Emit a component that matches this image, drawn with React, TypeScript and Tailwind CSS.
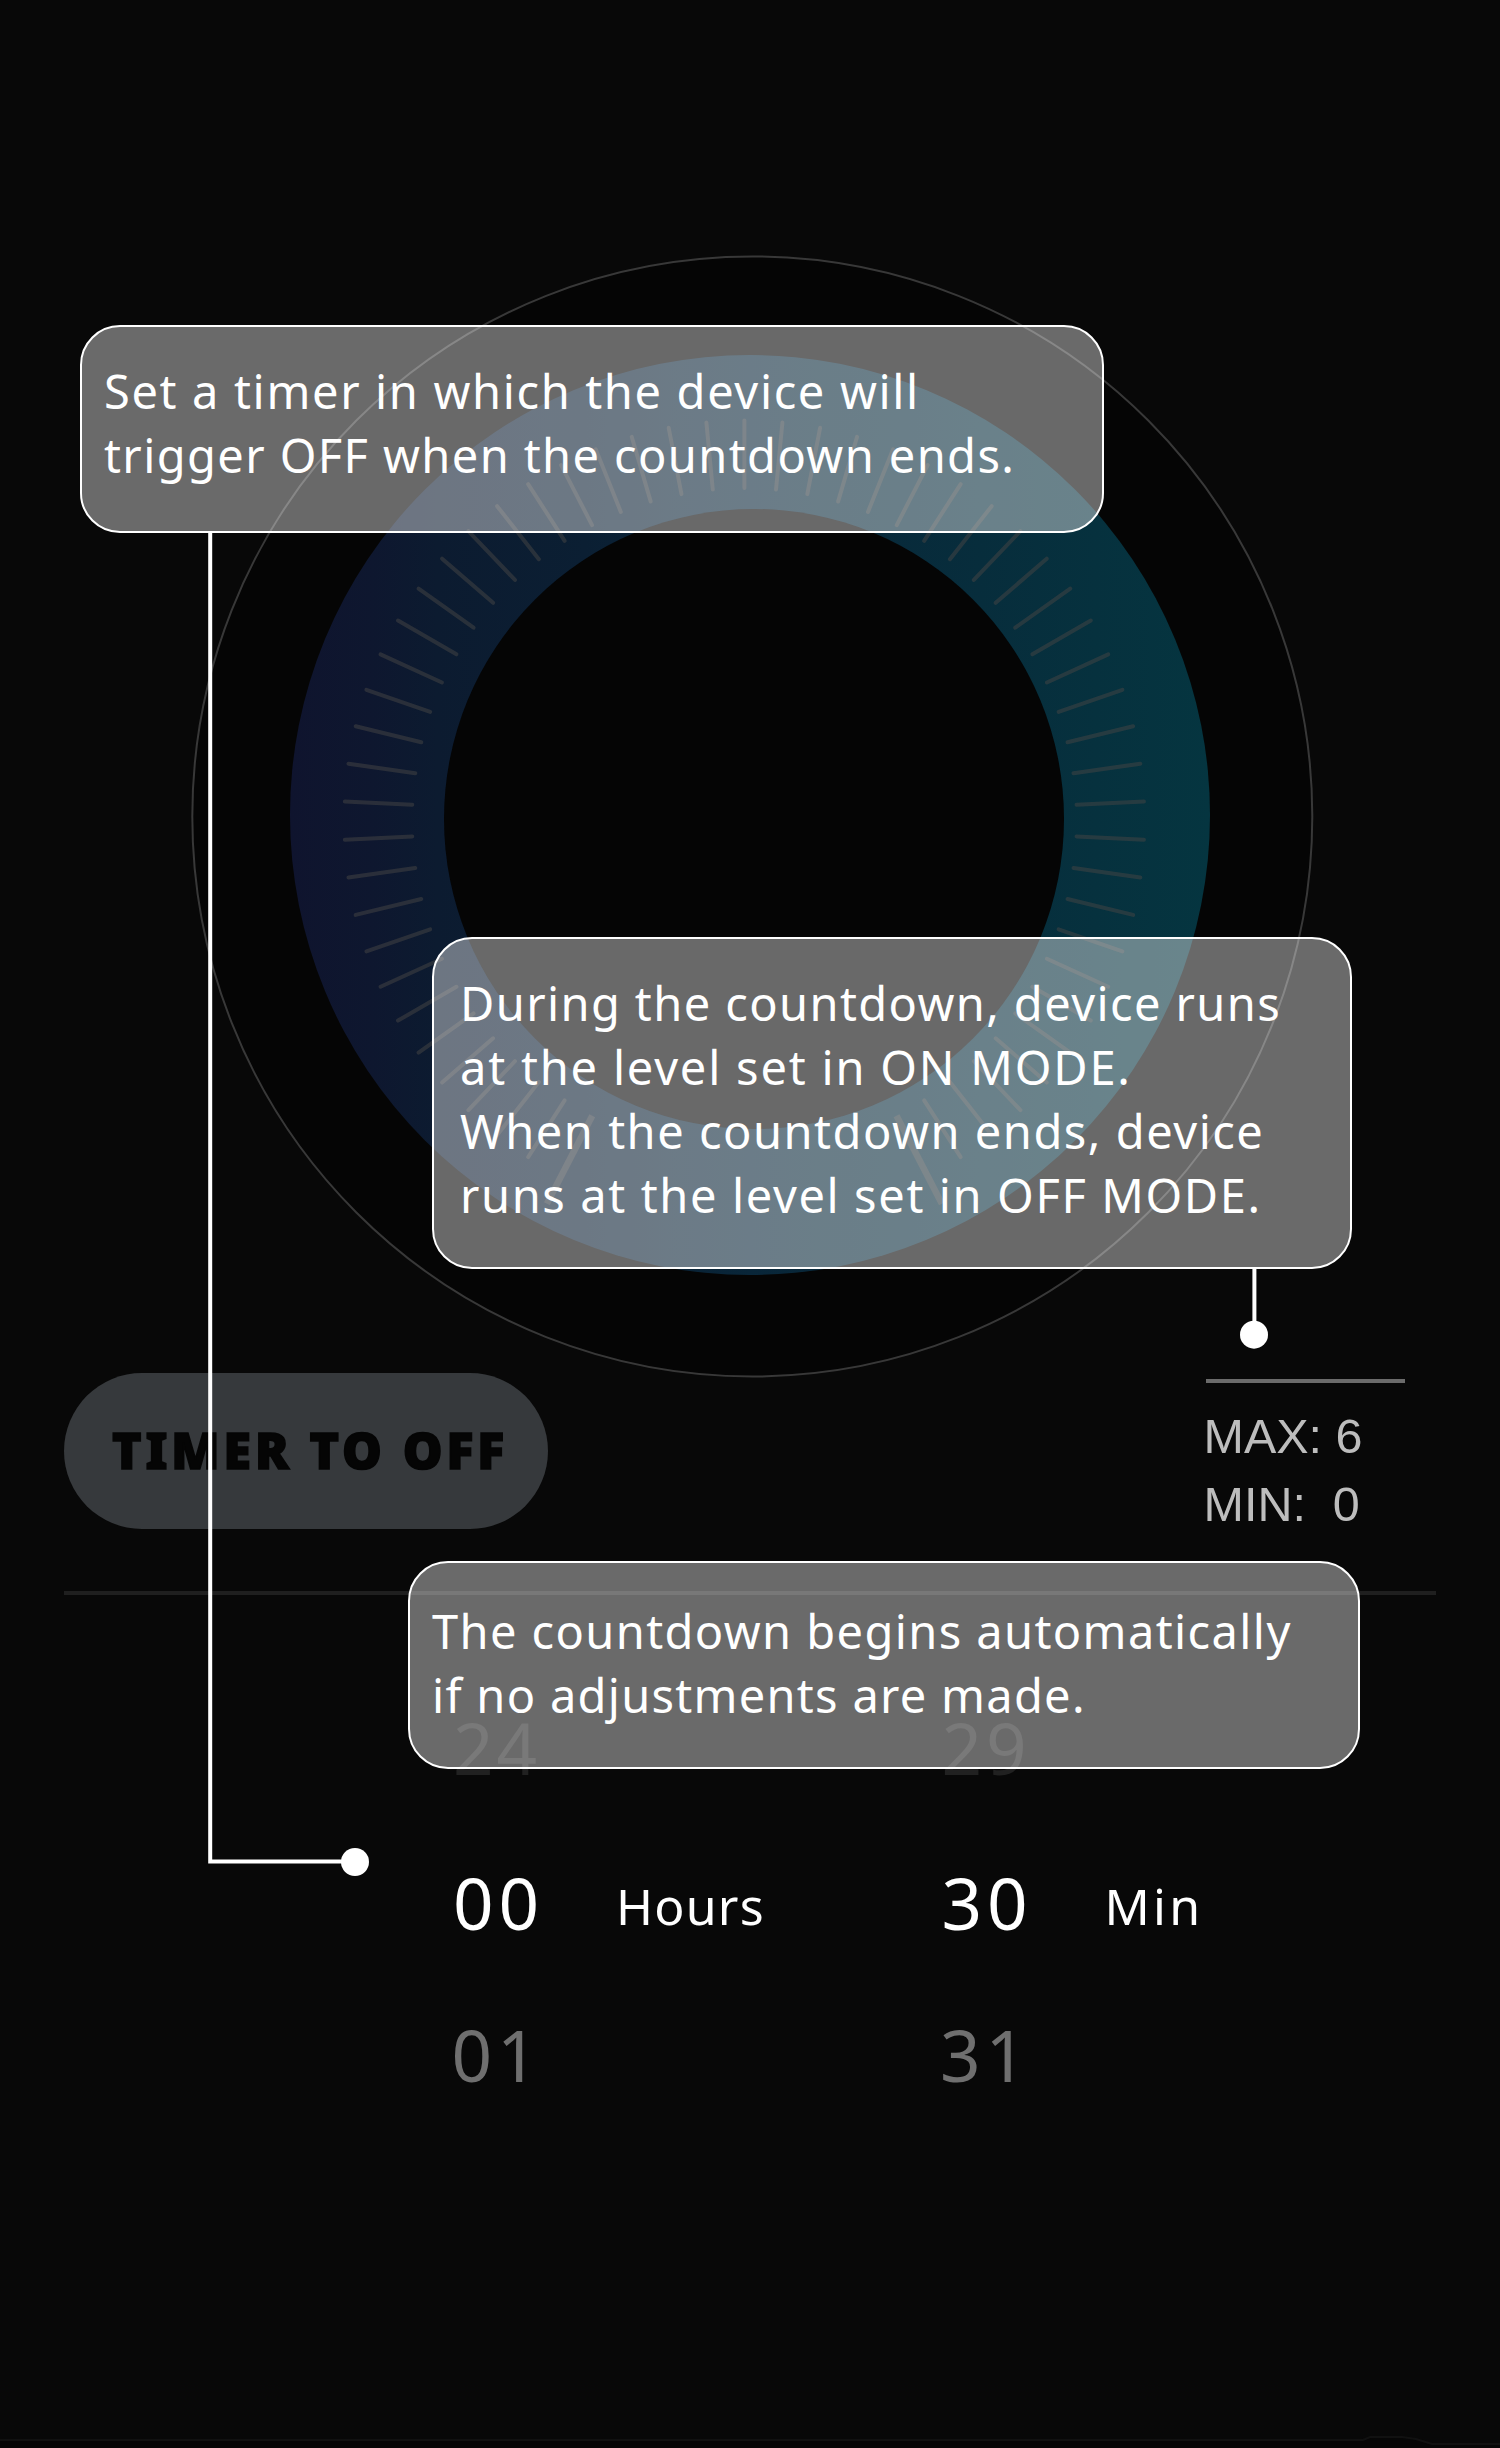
import React from "react";

const TICK_CENTER = { x: 744.4, y: 820.6 };
const TICK_STEP = 360 / 66;
const TICKS = Array.from({ length: 55 }, (_, i) => (i - 27) * TICK_STEP);
const END_TICKS = [-28 * TICK_STEP, 28 * TICK_STEP];

function Dial() {
  return (
    <svg className="block h-[1373px] w-full overflow-visible" viewBox="0 0 1500 1373" fill="none">
      <defs>
        <linearGradient id="ring" gradientUnits="userSpaceOnUse" x1="290" y1="0" x2="1210" y2="0">
          <stop offset="0" stopColor="#0f142e" />
          <stop offset="0.09" stopColor="#0e172f" />
          <stop offset="0.16" stopColor="#0c1b30" />
          <stop offset="0.32" stopColor="#0b1f33" />
          <stop offset="0.5" stopColor="#092639" />
          <stop offset="0.75" stopColor="#072d3c" />
          <stop offset="1" stopColor="#053540" />
        </linearGradient>
      </defs>
      <circle cx="752.3" cy="816.5" r="560" fill="#050505" stroke="#383838" strokeWidth="2" />
      <circle cx="750" cy="815" r="460" fill="url(#ring)" />
      <circle cx="754" cy="819" r="310" fill="#050505" />
      <g stroke="#444444" strokeOpacity="0.53" transform={`translate(${TICK_CENTER.x} ${TICK_CENTER.y})`}>
        {TICKS.map((a) => (
          <line key={a} y1="-400" y2="-332.5" strokeWidth="4" strokeLinecap="round" transform={`rotate(${a})`} />
        ))}
        {END_TICKS.map((a) => (
          <line key={a} y1="-431" y2="-332" strokeWidth="6.5" transform={`rotate(${a})`} />
        ))}
      </g>
    </svg>
  );
}

function PickerRow({ children }: { children: React.ReactNode }) {
  return <div className="grid h-full grid-cols-[163px_325.5px_163px_1fr] items-center whitespace-nowrap">{children}</div>;
}

function Connectors() {
  return (
    <svg className="absolute inset-0 h-[2448px] w-[1500px]" viewBox="0 0 1500 2448" fill="none" stroke="#fff" strokeWidth="4">
      <path d="M210.2 533V1861.4H350" />
      <circle cx="355" cy="1862" r="14" fill="#fff" stroke="none" />
      <path d="M1254.4 1269V1330" />
      <circle cx="1254" cy="1334.7" r="14" fill="#fff" stroke="none" />
    </svg>
  );
}

const callout =
  "absolute rounded-[40px] border-2 border-white bg-white/40 text-[47px] leading-[64px] text-white whitespace-nowrap";

export default function App() {
  return (
    <div className="relative h-[2448px] w-[1500px] overflow-hidden bg-[#080808] font-['Noto_Sans',sans-serif]">
      <main className="flex h-full flex-col">
        <Dial />

        <section className="flex h-[218px] shrink-0 items-start justify-between pr-[95px] pl-16">
          <button className="flex h-[156px] w-[484px] items-center rounded-full bg-[#36393c] pb-[2px] pl-[48px] text-[50px] font-black tracking-[3.9px] whitespace-nowrap text-[#050505] [-webkit-text-stroke:1.6px_#050505]">
            TIMER TO OFF
          </button>
          <div className="mt-1.5 w-[199px] border-t-4 border-[#6b6b6b] pt-[19px] font-['Liberation_Sans',sans-serif] text-[48.5px] leading-[68px] whitespace-pre text-[#bdbdbd]">
            <p className="-ml-[2.5px]">MAX: 6</p>
            <p className="-ml-[2.5px]">{"MIN:\u00a0 0"}</p>
          </div>
        </section>

        <hr className="mx-16 h-1 shrink-0 border-0 bg-[#1f1f1f]" />

        <section className="mt-[74px] grid shrink-0 grid-rows-[156px_155px_149px] pl-[453px] text-[71px] leading-none tracking-[5px]">
          <PickerRow>
            <span className="tracking-[3px] text-[#212121]">24</span>
            <span />
            <span className="tracking-[4px] text-[#212121]">29</span>
          </PickerRow>
          <PickerRow>
            <span className="text-white">00</span>
            <span className="pt-1.5 text-[50px] tracking-[1.2px] text-white">Hours</span>
            <span className="text-white">30</span>
            <span className="pt-1.5 text-[50px] tracking-[3.2px] text-white">Min</span>
          </PickerRow>
          <PickerRow>
            <span className="-ml-[1.5px] text-[#6f6f6f]">01</span>
            <span />
            <span className="-ml-[1.5px] text-[#6f6f6f]">31</span>
          </PickerRow>
        </section>

        <svg className="mt-auto block h-3 w-full shrink-0" viewBox="0 0 1500 12" fill="none">
          <path d="M0 4H1363L1370 1H1402L1416 3L1432 8H1500V12H0Z" fill="#060606" />
          <path d="M0 4H1363L1370 1H1402L1416 3L1432 8H1500" stroke="#111111" strokeWidth="2" />
        </svg>
      </main>

      <Connectors />

      <aside className={`${callout} top-[325px] left-[80px] h-[208px] w-[1024px] pt-8 pl-[22px]`}>
        <p className="tracking-[1.65px]">Set a timer in which the device will</p>
        <p className="tracking-[1.4px]">trigger OFF when the countdown ends.</p>
      </aside>

      <aside className={`${callout} top-[937px] left-[432px] h-[332px] w-[920px] pt-8 pl-[26px]`}>
        <p className="tracking-[1.4px]">During the countdown, device runs</p>
        <p className="tracking-[1.8px]">at the level set in ON MODE.</p>
        <p className="tracking-[1.52px]">When the countdown ends, device</p>
        <p className="tracking-[1.62px]">runs at the level set in OFF MODE.</p>
      </aside>

      <aside className={`${callout} top-[1561px] left-[408px] h-[208px] w-[952px] pt-9 pl-[22px]`}>
        <p className="tracking-[1.4px]">The countdown begins automatically</p>
        <p className="tracking-[1.28px]">if no adjustments are made.</p>
      </aside>
    </div>
  );
}
